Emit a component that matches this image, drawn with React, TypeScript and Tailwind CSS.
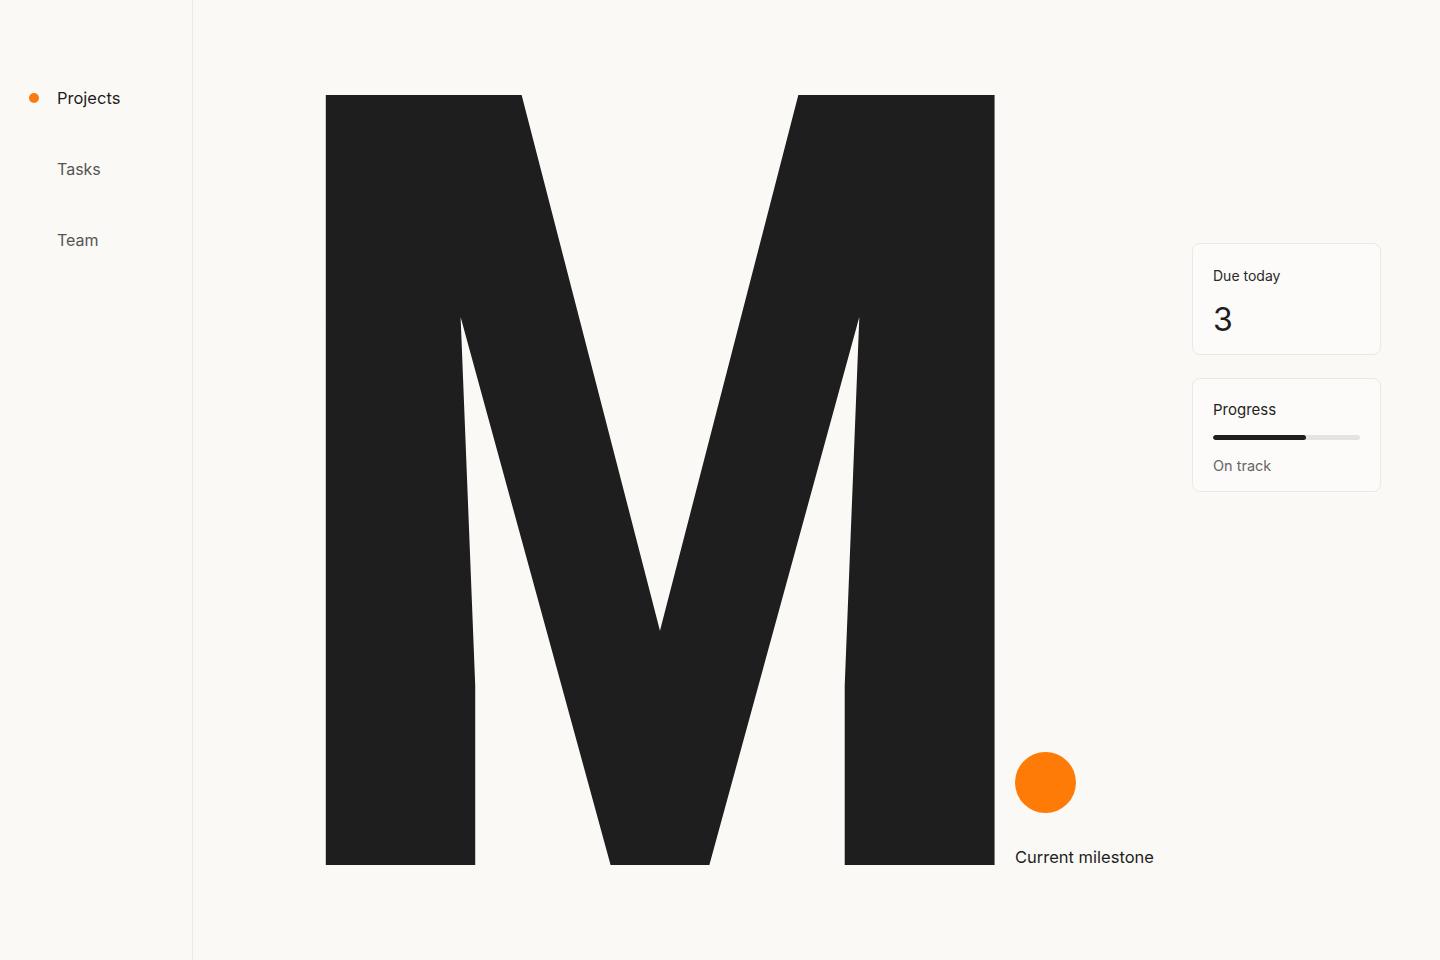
import React from "react";

export default function App() {
  return (
    <div className="flex h-[960px] w-[1440px] overflow-hidden bg-[#fbf9f6] font-['Inter','Noto_Sans',sans-serif] text-[#1e1e1e]">
      <aside className="flex w-[193px] shrink-0 flex-col gap-[47px] border-r border-[#ece9e5] pt-[86px]">
        <div className="flex h-6 items-center">
          <span className="ml-[29px] h-[10px] w-[10px] rounded-full bg-[#fb7a10]" />
          <span className="ml-[18px] text-[16.5px] leading-6 text-[#1e1e1e]">Projects</span>
        </div>
        <div className="flex h-6 items-center">
          <span className="ml-[57px] text-[16px] leading-6 text-[#555]">Tasks</span>
        </div>
        <div className="flex h-6 items-center">
          <span className="ml-[57px] text-[16px] leading-6 text-[#555]">Team</span>
        </div>
      </aside>
      <main className="flex flex-1 items-start pl-[133px] pt-[95px]">
        <div className="flex h-[770px] shrink-0 items-end">
          <div className="flex h-[770px] w-[670px] shrink-0 items-start justify-center">
            <span className="block scale-x-[0.805] font-['Roboto',sans-serif] text-[1083px] font-black leading-[0.739] text-[#1e1e1e]">M</span>
          </div>
          <div className="mb-[-4px] ml-[19px] flex flex-col items-start">
            <span className="h-[61px] w-[61px] rounded-full bg-[#ff7b07]" />
            <span className="mt-[32px] whitespace-nowrap text-[16.5px] leading-6 text-[#1e1e1e]">Current milestone</span>
          </div>
        </div>
        <div className="flex-1" />
        <div className="mr-[59px] mt-[148px] flex w-[189px] flex-col gap-[23px]">
          <div className="rounded-lg border border-[#ebe8e4] bg-[#fcfbf9] px-5 pb-[15px] pt-[21px]">
            <div className="text-[14px] leading-[22px] text-[#2a2a2a]">Due today</div>
            <div className="mt-[14px] text-[32px] leading-[38px] text-[#1e1e1e]">3</div>
          </div>
          <div className="rounded-lg border border-[#ebe8e4] bg-[#fcfbf9] px-5 pb-[14px] pt-[19px]">
            <div className="text-[15px] leading-6 text-[#1e1e1e]">Progress</div>
            <div className="mt-[13px] h-[5px] w-full overflow-hidden rounded-full bg-[#e6e3df]">
              <div className="h-full rounded-full bg-[#1e1e1e]" style={{ width: "63%" }} />
            </div>
            <div className="mt-[15px] text-[14.5px] leading-[22px] text-[#666]">On track</div>
          </div>
        </div>
      </main>
    </div>
  );
}
